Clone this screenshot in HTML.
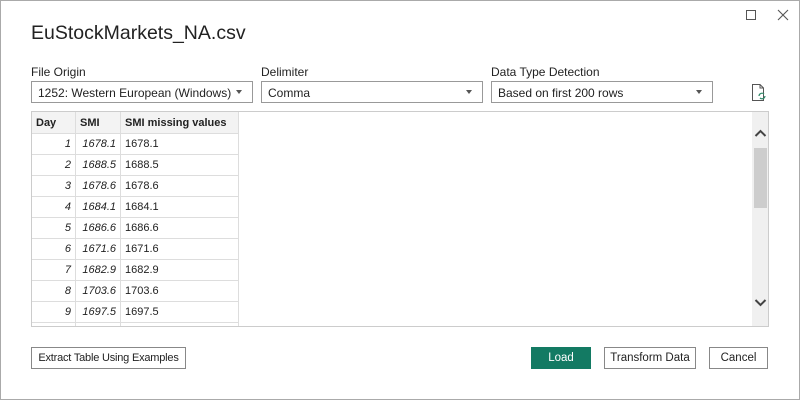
<!DOCTYPE html>
<html><head><style>
*{box-sizing:border-box;margin:0;padding:0}
body{width:800px;height:400px;background:#fff;font-family:"Liberation Sans",sans-serif;color:#222;position:relative;overflow:hidden}
.frame{position:absolute;left:0;top:0;width:800px;height:400px;border:1px solid #aaa}
.abs{position:absolute}
.title{left:31px;top:22px;font-size:19.5px;color:#222}
.lbl{font-size:12px;top:65px}
.dd{top:81px;height:22px;border:1px solid #999;font-size:12px;padding:4px 6px;width:222px}
.dd:after{content:"";position:absolute;right:10px;top:8px;border-left:3px solid transparent;border-right:3px solid transparent;border-top:4px solid #555}
.grid{left:31px;top:111px;width:738px;height:216px;border:1px solid #ccc;overflow:hidden}
table{border-collapse:collapse;font-size:11px;margin-left:-1px;margin-top:-1px}
td,th{border:1px solid #ddd;height:21px;padding:0 4px;white-space:nowrap}
th{background:#f3f3f3;text-align:left;font-weight:bold;height:22px}
td.r{text-align:right;font-style:italic}
.sb{left:720px;top:0;width:17px;height:214px;background:#f0f0f0}
.thumb{left:2px;top:36px;width:13px;height:60px;background:#cdcdcd}
.btn{top:347px;height:22px;border:1px solid #888;font-size:11.5px;text-align:center;line-height:20px;background:#fff;white-space:nowrap}
</style></head><body>
<div class="frame"></div>
<svg class="abs" style="left:744px;top:8px" width="14" height="14"><rect x="2.5" y="2.5" width="9" height="9" fill="none" stroke="#555"/></svg>
<svg class="abs" style="left:776px;top:8px" width="14" height="14"><path d="M2 2L12 12M12 2L2 12" stroke="#555" stroke-width="1.1"/></svg>
<div class="abs title">EuStockMarkets_NA.csv</div>
<div class="abs lbl" style="left:31px">File Origin</div>
<div class="abs lbl" style="left:261px">Delimiter</div>
<div class="abs lbl" style="left:491px">Data Type Detection</div>
<div class="abs dd" style="left:31px">1252: Western European (Windows)</div>
<div class="abs dd" style="left:261px">Comma</div>
<div class="abs dd" style="left:491px">Based on first 200 rows</div>
<svg class="abs" style="left:750px;top:83px" width="18" height="20"><path d="M2.5 1.5H10L13.5 5V17.5H2.5Z M10 1.5V5H13.5" fill="none" stroke="#555"/><path d="M9 13a3 3 0 0 1 5-2M15 13a3 3 0 0 1-5 2" fill="none" stroke="#2f8a6a" stroke-width="1.2"/></svg>
<div class="abs grid">
<table>
<tr><th style="width:44px">Day</th><th style="width:45px">SMI</th><th style="width:118px">SMI missing values</th></tr>
<tr><td class="r">1</td><td class="r">1678.1</td><td>1678.1</td></tr>
<tr><td class="r">2</td><td class="r">1688.5</td><td>1688.5</td></tr>
<tr><td class="r">3</td><td class="r">1678.6</td><td>1678.6</td></tr>
<tr><td class="r">4</td><td class="r">1684.1</td><td>1684.1</td></tr>
<tr><td class="r">5</td><td class="r">1686.6</td><td>1686.6</td></tr>
<tr><td class="r">6</td><td class="r">1671.6</td><td>1671.6</td></tr>
<tr><td class="r">7</td><td class="r">1682.9</td><td>1682.9</td></tr>
<tr><td class="r">8</td><td class="r">1703.6</td><td>1703.6</td></tr>
<tr><td class="r">9</td><td class="r">1697.5</td><td>1697.5</td></tr>
<tr><td></td><td></td><td></td></tr>
</table>
<div class="abs sb"><div class="abs thumb"></div>
<svg class="abs" style="left:2px;top:16px" width="13" height="10"><path d="M1.5 8L6.5 3L11.5 8" fill="none" stroke="#444" stroke-width="2"/></svg>
<svg class="abs" style="left:2px;top:186px" width="13" height="10"><path d="M1.5 2L6.5 7L11.5 2" fill="none" stroke="#444" stroke-width="2"/></svg>
</div>
</div>
<div class="abs btn" style="left:31px;width:155px;font-size:11px;letter-spacing:-0.2px">Extract Table Using Examples</div>
<div class="abs btn" style="left:531px;width:60px;background:#137a63;border-color:#137a63;color:#fff">Load</div>
<div class="abs btn" style="left:604px;width:92px">Transform Data</div>
<div class="abs btn" style="left:709px;width:59px">Cancel</div>
</body></html>
